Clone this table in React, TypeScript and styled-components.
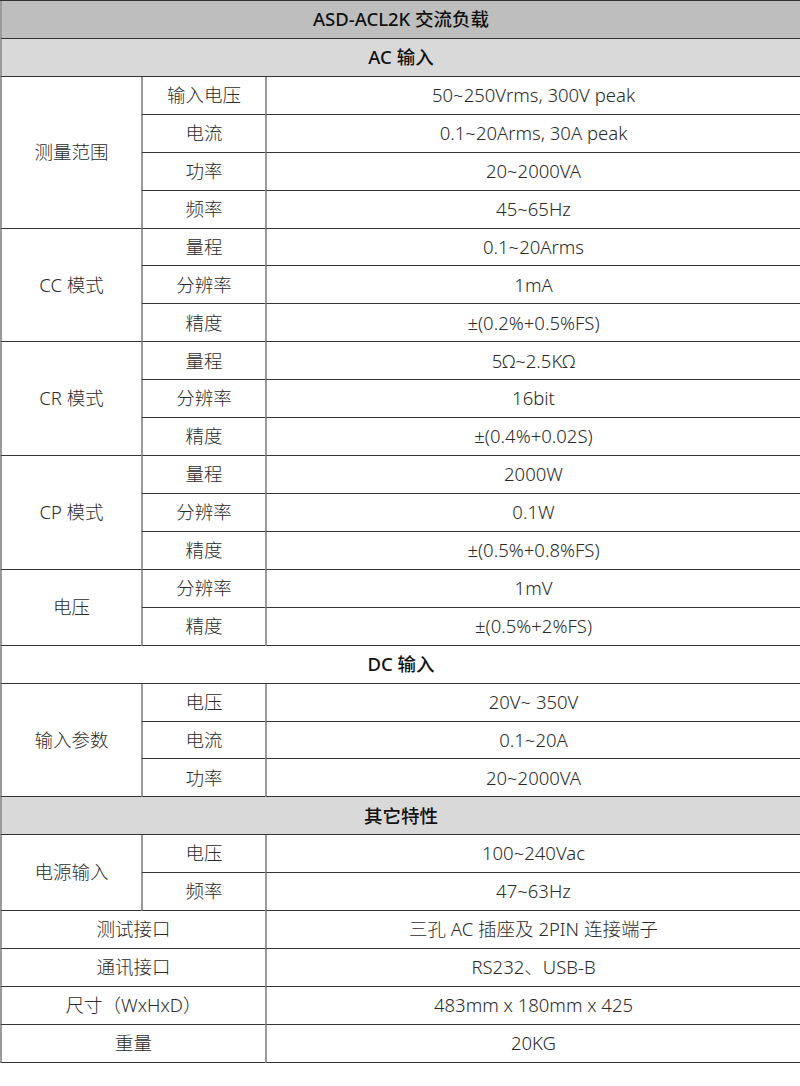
import React from 'react';
import styled, { createGlobalStyle } from 'styled-components';

const GlobalStyle = createGlobalStyle`
    html, body {
        margin: 0;
        padding: 0;
        background: #fff;
    }
    body {
        font-family: 'Noto Sans', 'Noto Sans CJK SC', sans-serif;
        color: #222;
    }
`;

type Group = {
    label: string;
    rows: [string, string][];
};

type Section = {
    title: string;
    tone: 'gray' | 'white';
    groups: Group[];
    singles?: [string, string][];
};

const sections: Section[] = [
    {
        title: 'AC 输入',
        tone: 'gray',
        groups: [
            {
                label: '测量范围',
                rows: [
                    ['输入电压', '50~250Vrms, 300V peak'],
                    ['电流', '0.1~20Arms, 30A peak'],
                    ['功率', '20~2000VA'],
                    ['频率', '45~65Hz'],
                ],
            },
            {
                label: 'CC 模式',
                rows: [
                    ['量程', '0.1~20Arms'],
                    ['分辨率', '1mA'],
                    ['精度', '±(0.2%+0.5%FS)'],
                ],
            },
            {
                label: 'CR 模式',
                rows: [
                    ['量程', '5Ω~2.5KΩ'],
                    ['分辨率', '16bit'],
                    ['精度', '±(0.4%+0.02S)'],
                ],
            },
            {
                label: 'CP 模式',
                rows: [
                    ['量程', '2000W'],
                    ['分辨率', '0.1W'],
                    ['精度', '±(0.5%+0.8%FS)'],
                ],
            },
            {
                label: '电压',
                rows: [
                    ['分辨率', '1mV'],
                    ['精度', '±(0.5%+2%FS)'],
                ],
            },
        ],
    },
    {
        title: 'DC 输入',
        tone: 'white',
        groups: [
            {
                label: '输入参数',
                rows: [
                    ['电压', '20V~ 350V'],
                    ['电流', '0.1~20A'],
                    ['功率', '20~2000VA'],
                ],
            },
        ],
    },
    {
        title: '其它特性',
        tone: 'gray',
        groups: [
            {
                label: '电源输入',
                rows: [
                    ['电压', '100~240Vac'],
                    ['频率', '47~63Hz'],
                ],
            },
        ],
        singles: [
            ['测试接口', '三孔 AC 插座及 2PIN 连接端子'],
            ['通讯接口', 'RS232、USB-B'],
            ['尺寸（WxHxD）', '483mm x 180mm x 425'],
            ['重量', '20KG'],
        ],
    },
];

const SpecTable = () => {
    return (
        <Table>
            <colgroup>
                <col style={{ width: 141 }} />
                <col style={{ width: 124 }} />
                <col />
            </colgroup>
            <tbody>
                <Row>
                    <HeadCell colSpan={3} tone="dark">
                        ASD-ACL2K 交流负载
                    </HeadCell>
                </Row>
                {sections.map((section) => (
                    <React.Fragment key={section.title}>
                        <Row>
                            <HeadCell colSpan={3} tone={section.tone}>
                                {section.title}
                            </HeadCell>
                        </Row>
                        {section.groups.map((group) =>
                            group.rows.map(([name, value], i) => (
                                <Row key={group.label + name}>
                                    {i === 0 && <Cell rowSpan={group.rows.length}>{group.label}</Cell>}
                                    <Cell>{name}</Cell>
                                    <Cell>{value}</Cell>
                                </Row>
                            ))
                        )}
                        {section.singles?.map(([name, value]) => (
                            <Row key={name}>
                                <Cell colSpan={2}>{name}</Cell>
                                <Cell>{value}</Cell>
                            </Row>
                        ))}
                    </React.Fragment>
                ))}
            </tbody>
        </Table>
    );
};

const App = () => (
    <>
        <GlobalStyle />
        <SpecTable />
    </>
);

const Table = styled.table`
    width: 800px;
    table-layout: fixed;
    border-collapse: separate;
    border-spacing: 0;
    border-top: 1px solid #333;
    font-size: 18.5px;
    line-height: 1;
`;

const Row = styled.tr`
    height: 37.93px;
`;

const Cell = styled.td`
    padding: 0;
    text-align: center;
    vertical-align: middle;
    border-left: 2px solid #9a9a9a;
    border-bottom: 1px solid #333;
    color: #2a2a2a;
    font-weight: 300;
    white-space: nowrap;
`;

const HeadCell = styled(Cell)<{ tone: 'dark' | 'gray' | 'white' }>`
    font-weight: 500;
    color: #111;
    background: ${(p) => (p.tone === 'dark' ? '#bebebe' : p.tone === 'gray' ? '#d9d9d9' : '#fff')};
`;

export default App;
